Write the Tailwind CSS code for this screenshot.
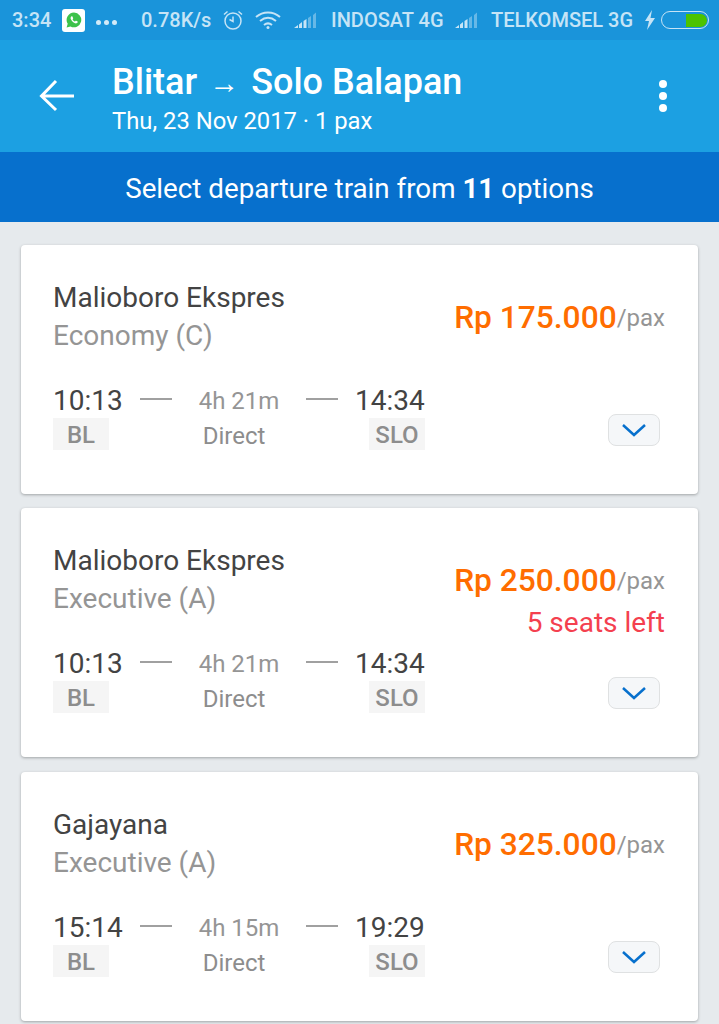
<!doctype html>
<html><head><meta charset="utf-8"><script src="https://cdn.jsdelivr.net/npm/@tailwindcss/browser@4"></script></head>
<body class="m-0">
<div class="w-[719px] h-[1024px] overflow-hidden bg-[#e6eaed] font-['Roboto',sans-serif]">
  <!-- status bar -->
  <div class="h-10 bg-[#1a94da] flex items-center pl-3 text-[#c6e4f6] text-[20px] font-medium whitespace-nowrap relative">
    <span class="w-[39px]">3:34</span>
    <span class="ml-[11px] w-[23px] h-[23px] rounded-[3px] bg-white flex items-center justify-center">
      <svg width="18" height="18" viewBox="0 0 18 18"><path d="M9 1.500a7.400 7.400 0 0 0-6.300 11.200L1.600 16.500l3.900-1A7.400 7.400 0 1 0 9 1.500z" fill="#3dc24a"/><path d="M6.600 5.200c-.9.600-1.300 1.600-.8 2.900.7 1.800 2.300 3.500 4.200 4.200 1.200.4 2.200 0 2.800-1 .2-.4 0-.7-.3-.9l-1.300-.6c-.3-.1-.5 0-.7.2l-.5.600c-1-.4-1.900-1.200-2.400-2.200l.4-.6c.2-.2.2-.4.100-.7l-.6-1.400c-.1-.4-.3-.5-.4-.5z" fill="#fff"/></svg>
    </span>
    <span class="ml-[11px] flex gap-[3px] mt-[5px] w-[21px]"><i class="block w-[5px] h-[5px] rounded-full bg-[#d3eaf8]"></i><i class="block w-[5px] h-[5px] rounded-full bg-[#d3eaf8]"></i><i class="block w-[5px] h-[5px] rounded-full bg-[#d3eaf8]"></i></span>
    <span class="ml-[24px] w-[70px]">0.78K/s</span>
    <svg class="ml-[11px]" width="22" height="22" viewBox="0 0 22 22" fill="none" stroke="#c6e4f6" stroke-width="1.500"><circle cx="11" cy="12" r="8"/><path d="M11 7.500V12.500L7.500 10.500M2 5.500 5.500 2.500M20 5.500 16.500 2.500"/></svg>
    <svg class="ml-[11px]" width="26" height="20" viewBox="0 0 26 20" fill="none" stroke="#c6e4f6" stroke-width="2"><path d="M1 7c7-6 17-6 24 0M5 11c5-4 11-4 16 0M9 15c2.500-2 5.500-2 8 0"/><circle cx="13" cy="17.500" r="1.500" fill="#c6e4f6" stroke="none"/></svg>
    <svg class="ml-[13px]" width="25" height="18" viewBox="0 0 25 18"><g fill="#c6e4f6"><path d="M0 17 4 14V17zM5 13.500 8 11V17H5zM9.500 10 12.500 8V17h-3z"/></g><g fill="#c6e4f6" opacity=".45"><path d="M14 7 17 5V17h-3zM19 4 22 1.500V17h-3z"/></g></svg>
    <span class="ml-[12px] w-[113px]">INDOSAT 4G</span>
    <svg class="ml-[11px]" width="25" height="18" viewBox="0 0 25 18"><g fill="#c6e4f6"><path d="M0 17 4 14V17zM5 13.500 8 11V17H5zM9.500 10 12.500 8V17h-3z"/></g><g fill="#c6e4f6" opacity=".45"><path d="M14 7 17 5V17h-3zM19 4 22 1.500V17h-3z"/></g></svg>
    <span class="ml-[11px] w-[143px]">TELKOMSEL 3G</span>
    <svg class="ml-[10px]" width="12" height="20" viewBox="0 0 12 20" fill="#c6e4f6"><path d="M8 0 1 11h4l-2 9 8-12H6.500z"/></svg>
    <span class="ml-[5px] w-[48px] h-[18px] rounded-full border-[1.500px] border-[#c6e4f6] p-[1.500px] flex justify-end"><span class="block w-[21px] h-full rounded-r-full bg-[#4cc300]"></span></span>
  </div>
  <!-- app bar -->
  <div class="h-[112px] bg-[#1ca0e2] flex items-start text-white relative">
    <svg class="ml-[39px] mt-[38px]" width="36" height="36" viewBox="0 0 36 36" fill="none" stroke="#fff" stroke-width="3"><path d="M35 18H3M17 3 2.500 18 17 32" /></svg>
    <div class="ml-[37px] mt-[19px]">
      <div class="text-[36px] leading-[44px] font-medium flex items-center whitespace-nowrap">Blitar<span class="text-[30px] font-normal mx-[12px] mt-[2px] font-['Liberation_Sans',sans-serif]">→</span>Solo Balapan</div>
      <div class="text-[23.800px] leading-[30px] whitespace-nowrap mt-[1px]">Thu, 23 Nov 2017 · 1 pax</div>
    </div>
    <div class="absolute left-[659px] top-[40px] flex flex-col gap-[4px]"><i class="block w-[8px] h-[8px] rounded-full bg-white"></i><i class="block w-[8px] h-[8px] rounded-full bg-white"></i><i class="block w-[8px] h-[8px] rounded-full bg-white"></i></div>
  </div>
  <!-- strip -->
  <div class="h-[70px] bg-[#0770cd] text-white text-[27.750px] flex items-center justify-center pt-[3px]"><span>Select departure train from <b class="font-bold">11</b> options</span></div>
  <!-- cards -->
  <div class="pl-[21px] pr-[21px] pt-[23px] flex flex-col gap-[14px] w-[719px]">
    <div class="h-[249px] shrink-0 bg-white rounded-[4px] shadow-[0_1px_3px_rgba(0,0,0,0.3)] relative pl-[32px] pr-[33px] pt-[34px]">
      <div class="text-[28px] leading-[38px] text-[#434343]">Malioboro Ekspres</div>
      <div class="text-[28px] leading-[38px] text-[#959595]">Economy (C)</div>
      <div class="mt-[28px] w-[372px] grid grid-cols-[69px_1fr_70px]">
        <div class="text-[28px] leading-[36px] text-[#434343]">10:13</div>
        <div class="flex items-center justify-between pl-[18px] pr-[17px]"><i class="block w-[32px] h-[1.500px] bg-[#a0a0a0] -mt-[4px]"></i><span class="text-[24px] text-[#959595]">4h 21m</span><i class="block w-[32px] h-[1.500px] bg-[#a0a0a0] -mt-[4px]"></i></div>
        <div class="text-[28px] leading-[36px] text-[#434343] text-right pr-[1px]">14:34</div>
        <div><span class="flex w-[56px] h-[32px] -mt-[1px] pt-[2px] bg-[#f5f5f5] items-center justify-center text-[24px] font-medium text-[#8d8d8d]">BL</span></div>
        <div class="text-center text-[24px] leading-[32px] text-[#8d8d8d] pr-[9px] mt-[1px]">Direct</div>
        <div class="flex justify-end"><span class="flex w-[56px] h-[32px] -mt-[1px] pt-[2px] bg-[#f5f5f5] items-center justify-center text-[24px] font-medium text-[#8d8d8d]">SLO</span></div>
      </div>
      <div class="absolute right-[33px] top-[53px] flex items-baseline whitespace-nowrap"><span class="text-[31.700px] leading-[40px] font-medium text-[#ff6d00]">Rp 175.000</span><span class="text-[24px] text-[#959595] -translate-y-[2px]">/pax</span></div>
      <div class="absolute right-[38px] top-[169px] w-[52px] h-[32px] rounded-[8px] bg-[#f5f7f9] border border-[#dfe1e2] flex items-center justify-center"><svg width="26" height="16" viewBox="0 0 26 16" fill="none" stroke="#0770cd" stroke-width="2.500"><path d="M2 3 13 13 24 3"/></svg></div>
    </div>
    <div class="h-[249px] shrink-0 bg-white rounded-[4px] shadow-[0_1px_3px_rgba(0,0,0,0.3)] relative pl-[32px] pr-[33px] pt-[34px]">
      <div class="text-[28px] leading-[38px] text-[#434343]">Malioboro Ekspres</div>
      <div class="text-[28px] leading-[38px] text-[#959595]">Executive (A)</div>
      <div class="mt-[28px] w-[372px] grid grid-cols-[69px_1fr_70px]">
        <div class="text-[28px] leading-[36px] text-[#434343]">10:13</div>
        <div class="flex items-center justify-between pl-[18px] pr-[17px]"><i class="block w-[32px] h-[1.500px] bg-[#a0a0a0] -mt-[4px]"></i><span class="text-[24px] text-[#959595]">4h 21m</span><i class="block w-[32px] h-[1.500px] bg-[#a0a0a0] -mt-[4px]"></i></div>
        <div class="text-[28px] leading-[36px] text-[#434343] text-right pr-[1px]">14:34</div>
        <div><span class="flex w-[56px] h-[32px] -mt-[1px] pt-[2px] bg-[#f5f5f5] items-center justify-center text-[24px] font-medium text-[#8d8d8d]">BL</span></div>
        <div class="text-center text-[24px] leading-[32px] text-[#8d8d8d] pr-[9px] mt-[1px]">Direct</div>
        <div class="flex justify-end"><span class="flex w-[56px] h-[32px] -mt-[1px] pt-[2px] bg-[#f5f5f5] items-center justify-center text-[24px] font-medium text-[#8d8d8d]">SLO</span></div>
      </div>
      <div class="absolute right-[33px] top-[53px] flex flex-col items-end whitespace-nowrap"><div class="flex items-baseline"><span class="text-[31.700px] leading-[40px] font-medium text-[#ff6d00]">Rp 250.000</span><span class="text-[24px] text-[#959595] -translate-y-[2px]">/pax</span></div><div class="text-[28px] leading-[40px] text-[#f4404f] mt-[2px]">5 seats left</div></div>
      <div class="absolute right-[38px] top-[169px] w-[52px] h-[32px] rounded-[8px] bg-[#f5f7f9] border border-[#dfe1e2] flex items-center justify-center"><svg width="26" height="16" viewBox="0 0 26 16" fill="none" stroke="#0770cd" stroke-width="2.500"><path d="M2 3 13 13 24 3"/></svg></div>
    </div>
    <div class="h-[249px] shrink-0 bg-white rounded-[4px] shadow-[0_1px_3px_rgba(0,0,0,0.3)] relative pl-[32px] pr-[33px] pt-[34px] mt-[1px]">
      <div class="text-[28px] leading-[38px] text-[#434343]">Gajayana</div>
      <div class="text-[28px] leading-[38px] text-[#959595]">Executive (A)</div>
      <div class="mt-[28px] w-[372px] grid grid-cols-[69px_1fr_70px]">
        <div class="text-[28px] leading-[36px] text-[#434343]">15:14</div>
        <div class="flex items-center justify-between pl-[18px] pr-[17px]"><i class="block w-[32px] h-[1.500px] bg-[#a0a0a0] -mt-[4px]"></i><span class="text-[24px] text-[#959595]">4h 15m</span><i class="block w-[32px] h-[1.500px] bg-[#a0a0a0] -mt-[4px]"></i></div>
        <div class="text-[28px] leading-[36px] text-[#434343] text-right pr-[1px]">19:29</div>
        <div><span class="flex w-[56px] h-[32px] -mt-[1px] pt-[2px] bg-[#f5f5f5] items-center justify-center text-[24px] font-medium text-[#8d8d8d]">BL</span></div>
        <div class="text-center text-[24px] leading-[32px] text-[#8d8d8d] pr-[9px] mt-[1px]">Direct</div>
        <div class="flex justify-end"><span class="flex w-[56px] h-[32px] -mt-[1px] pt-[2px] bg-[#f5f5f5] items-center justify-center text-[24px] font-medium text-[#8d8d8d]">SLO</span></div>
      </div>
      <div class="absolute right-[33px] top-[53px] flex items-baseline whitespace-nowrap"><span class="text-[31.700px] leading-[40px] font-medium text-[#ff6d00]">Rp 325.000</span><span class="text-[24px] text-[#959595] -translate-y-[2px]">/pax</span></div>
      <div class="absolute right-[38px] top-[169px] w-[52px] h-[32px] rounded-[8px] bg-[#f5f7f9] border border-[#dfe1e2] flex items-center justify-center"><svg width="26" height="16" viewBox="0 0 26 16" fill="none" stroke="#0770cd" stroke-width="2.500"><path d="M2 3 13 13 24 3"/></svg></div>
    </div>
  </div>
</div>
</body></html>
